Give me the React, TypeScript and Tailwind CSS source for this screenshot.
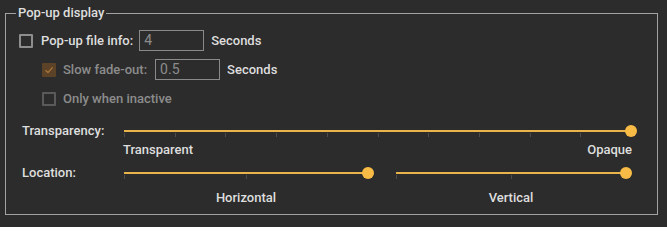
import React from 'react'

const font = { fontFamily: 'Roboto, "Segoe UI", sans-serif' }

function Box({ checked, disabled }: { checked?: boolean; disabled?: boolean }) {
  if (checked) {
    return (
      <span className="flex h-[14px] w-[14px] shrink-0 items-center justify-center rounded-[1px] bg-[#5c4226]">
        <svg viewBox="0 0 14 14" className="h-[14px] w-[14px]">
          <path d="M3.5 7.2 L6 9.6 L10.6 4.4" fill="none" stroke="#a8743a" strokeWidth="1.4" />
        </svg>
      </span>
    )
  }
  return (
    <span
      className={
        disabled
          ? 'h-[14px] w-[14px] shrink-0 rounded-[1px] border-2 border-[#5a5a5a]'
          : 'h-[14px] w-[14px] shrink-0 rounded-[1px] border-2 border-[#8e8e8e]'
      }
    />
  )
}

function Field({ value }: { value: string }) {
  return (
    <div className="flex h-[21px] w-[65px] items-center border border-[#8a8a8a] px-[4px] text-[14px] font-normal text-[#8c8c8c]">
      {value}
    </div>
  )
}

function Slider({ width, ticks, value }: { width: number; ticks: number; value: number }) {
  const marks = Array.from({ length: ticks }, (_, i) => (i / (ticks - 1)) * 100)
  return (
    <div className="relative h-[12px] shrink-0" style={{ width }}>
      <div className="absolute left-0 right-0 top-[5px] h-[2px] bg-[#eab44c]" />
      {marks.map((m) => (
        <div
          key={m}
          className="absolute top-[8px] h-[4px] w-px bg-[#4c4c4c]"
          style={{ left: `${m}%` }}
        />
      ))}
      <div
        className="absolute top-0 h-[12px] w-[12px] -translate-x-1/2 rounded-full bg-[#f8bb45]"
        style={{ left: `${value}%` }}
      />
    </div>
  )
}

export default function App() {
  return (
    <div
      className="h-[227px] w-[667px] bg-[#2c2c2c] pl-[5px] pt-[5px] text-[13px] font-medium text-[#dedede]"
      style={font}
    >
      <fieldset className="h-[210px] w-[653px] border border-[#a2a2a2] px-0 pb-0">
        <legend className="ml-[10px] px-[2px] leading-[16px]">Pop-up display</legend>

        <div className="flex flex-col gap-[8px] pl-[13px] pt-[9px]">
          <div className="flex h-[21px] items-center">
            <Box />
            <span className="ml-[8px]">Pop-up file info:</span>
            <span className="ml-[6px]">
              <Field value="4" />
            </span>
            <span className="ml-[7px]">Seconds</span>
          </div>
          <div className="flex h-[21px] items-center pl-[23px]">
            <Box checked />
            <span className="ml-[7px] text-[#8c8c8c]">Slow fade-out:</span>
            <span className="ml-[8px]">
              <Field value="0.5" />
            </span>
            <span className="ml-[7px]">Seconds</span>
          </div>
          <div className="flex h-[21px] items-center pl-[23px]">
            <Box disabled />
            <span className="ml-[7px] text-[#8c8c8c]">Only when inactive</span>
          </div>
        </div>

        <div className="pl-[16px] pt-[16px]">
          <div className="flex h-[12px] items-center">
            <span className="w-[102px] shrink-0">Transparency:</span>
            <Slider width={507} ticks={11} value={100} />
          </div>
          <div className="mt-[5px] flex h-[16px] w-[610px] items-center justify-between pl-[101px]">
            <span>Transparent</span>
            <span>Opaque</span>
          </div>
          <div className="mt-[9px] flex h-[12px] items-center">
            <span className="w-[102px] shrink-0">Location:</span>
            <Slider width={244} ticks={3} value={100} />
            <div className="w-[28px] shrink-0" />
            <Slider width={230} ticks={3} value={100} />
          </div>
          <div className="mt-[11px] flex h-[16px] items-center">
            <span className="w-[102px] shrink-0" />
            <span className="w-[244px] text-center">Horizontal</span>
            <span className="w-[28px]" />
            <span className="w-[230px] text-center">Vertical</span>
          </div>
        </div>
      </fieldset>
    </div>
  )
}
